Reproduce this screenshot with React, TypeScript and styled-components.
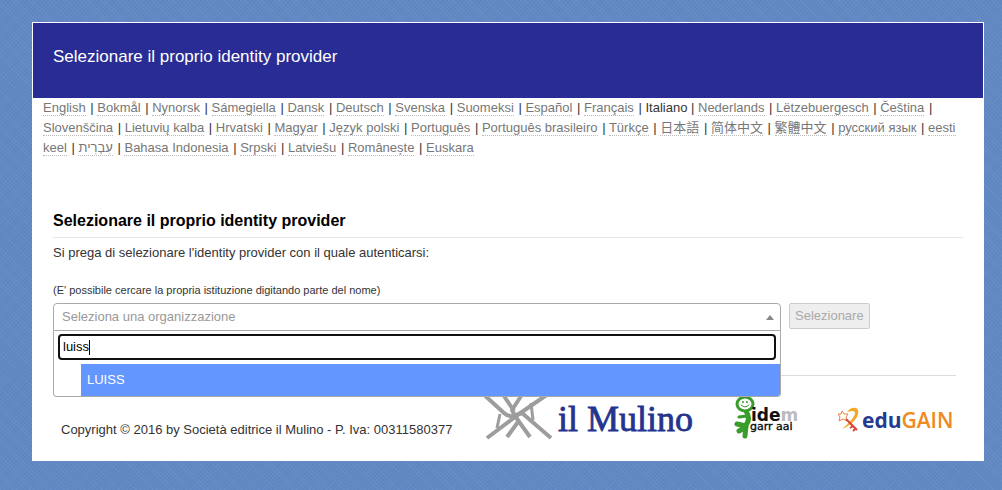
import React, { useState } from "react";
import styled, { createGlobalStyle, css } from "styled-components";

const GlobalStyle = createGlobalStyle`
  *, *::before, *::after { box-sizing: border-box; }
  body {
    margin: 0;
    padding: 22px 18px 29px 32px;
    color: #333;
    font-family: "Liberation Sans", Arial, "Noto Sans CJK SC", sans-serif;
    font-size: 13px;
    line-height: 20px;
    background-color: #6188c2;
    background-image:
      repeating-linear-gradient(45deg, rgba(255, 255, 255, 0.05) 0 1px, transparent 1px 3px),
      repeating-linear-gradient(-45deg, rgba(30, 60, 130, 0.04) 0 1px, transparent 1px 3px);
  }
`;

const Page = styled.div`
  background: #fff;
  border: 1px solid #fff;
`;

const Header = styled.header`
  display: flex;
  align-items: center;
  height: 75px;
  padding: 0 20px 8px;
  background: #282c94;
`;

const SiteTitle = styled.h1`
  margin: 0;
  color: #fff;
  font-size: 17px;
  font-weight: 400;
  line-height: 24px;
`;

const Languages = styled.nav`
  padding: 0 20px 0 10px;
`;

const LanguageLink = styled.a`
  margin-right: 1px;
  color: #777;
  text-decoration: none;
  border-bottom: 1px dotted #bbb;
`;

const Content = styled.main`
  padding: 51px 20px 0;
`;

const Title = styled.h2`
  margin: 0;
  padding-bottom: 4px;
  border-bottom: 1px solid #e6e6e6;
  color: #000;
  font-size: 16px;
  font-weight: 700;
  line-height: 24px;
`;

const Intro = styled.p`
  margin: 5px 0 17px;
`;

const Hint = styled.label`
  display: block;
  font-size: 11px;
  padding-bottom: 3px;
`;

const Form = styled.form`
  display: flex;
  align-items: flex-start;
  gap: 8px;
`;

const Picker = styled.div`
  position: relative;
  width: 80%;
`;

const Selection = styled.button`
  display: flex;
  align-items: center;
  justify-content: space-between;
  width: 100%;
  height: 28px;
  padding: 0 6px 0 8px;
  border: 1px solid #aaa;
  border-radius: 4px 4px 0 0;
  background: #fff;
  color: #999;
  font: inherit;
`;

const Arrow = styled.span`
  border: 4px solid transparent;
  border-top-width: 0;
  border-bottom: 5px solid #888;
`;

const Dropdown = styled.div`
  position: absolute;
  z-index: 1;
  top: 100%;
  left: 0;
  right: 0;
  overflow: hidden;
  border: 1px solid #aaa;
  border-top: 0;
  border-radius: 0 0 4px 4px;
  background: #fff;
`;

const SearchBox = styled.div`
  display: flex;
  align-items: center;
  height: 26px;
  margin: 3px 4px 4px;
  padding: 0 3px;
  border: 2px solid #101010;
  border-radius: 4px;
  cursor: text;
`;

const SearchInput = styled.input`
  field-sizing: content;
  padding: 0;
  border: 0;
  outline: 0;
  background: none;
  color: #000;
  font: inherit;
`;

const Caret = styled.span`
  width: 1px;
  height: 15px;
  background: #000;
`;

const Options = styled.ul`
  margin: 0;
  padding: 0 0 0 27px;
  list-style: none;
`;

const Option = styled.li<{ $active?: boolean }>`
  padding: 6px;
  ${({ $active }) => $active && css`
    background: #6397ff;
    color: #fff;
  `}
`;

const Submit = styled.button`
  height: 26px;
  padding: 0 5px;
  border: 1px solid #ccc;
  border-radius: 2px;
  background: #eee;
  color: #aaa;
  font: inherit;
`;

const Rule = styled.hr`
  margin: 44px 7px 0 0;
  border: 0;
  border-top: 1px solid #ddd;
`;

const Footer = styled.footer`
  display: flex;
  align-items: flex-start;
  gap: 32px;
  padding: 9px 20px 20px 28px;
`;

const Copyright = styled.p`
  margin: 0;
  padding-top: 35px;
`;

const Logos = styled.div`
  display: flex;
  gap: 40px;
`;

const Logo = styled.svg`
  display: block;
  flex: none;
`;

const languages = [
  "English", "Bokmål", "Nynorsk", "Sámegiella", "Dansk", "Deutsch", "Svenska", "Suomeksi",
  "Español", "Français", "Italiano", "Nederlands", "Lëtzebuergesch", "Čeština", "Slovenščina",
  "Lietuvių kalba", "Hrvatski", "Magyar", "Język polski", "Português", "Português brasileiro",
  "Türkçe", "日本語", "简体中文", "繁體中文", "русский язык", "eesti keel", "עִבְרִית",
  "Bahasa Indonesia", "Srpski", "Latviešu", "Românește", "Euskara",
];
const current = "Italiano";

function MulinoLogo() {
  return (
    <Logo width="210" height="55" viewBox="0 0 210 55" role="img" aria-label="il Mulino">
      <g stroke="#9d9d9d" strokeWidth="4" fill="none" strokeLinejoin="round">
        <path d="M-2 8 L20 28 Q24 32 31 31 L46 52" />
        <path d="M18 8 L30 26 M39 8 L28 25 L31 31" />
        <path d="M64 9 L35 29 L3 53" />
        <path d="M23 52 L34 37 M32 30 L38 28 L67 53" />
        <path d="M47 18 L49 35 M16 29 L13 43" strokeWidth="3" />
      </g>
      <text x="74" y="46" fill="#24348f" stroke="#24348f" strokeWidth="0.8" fontFamily="Liberation Serif, serif" fontSize="36">il Mulino</text>
    </Logo>
  );
}

function IdemLogo() {
  return (
    <Logo width="64" height="55" viewBox="0 0 64 55" role="img" aria-label="idem garr aai">
      <g fill="none" stroke="#3a9c2b" strokeLinecap="round" strokeLinejoin="round">
        <path d="M12 26 Q17 34 12 40" strokeWidth="5" />
        <path d="M12 41 L3 39 M12 42 L5 46 M12 41 L11 51" strokeWidth="5" />
        <path d="M13 31 L5 32" strokeWidth="3" />
        <ellipse cx="11" cy="19" rx="8" ry="7" strokeWidth="3" fill="#fff" />
        <path d="M7 20 Q11 24 15 20" strokeWidth="1" />
      </g>
      <circle cx="9" cy="17" r="1" fill="#3a9c2b" />
      <circle cx="13" cy="17" r="1" fill="#3a9c2b" />
      <text x="17" y="36" fontFamily="DejaVu Sans, sans-serif" fontWeight="700" fontSize="17" fill="#111">ide<tspan fill="#bbb">m</tspan></text>
      <text x="16" y="45" fontFamily="DejaVu Sans, sans-serif" fontSize="11" fill="#111" stroke="#111" strokeWidth="0.4">garr aai</text>
    </Logo>
  );
}

function EduGainLogo() {
  return (
    <Logo width="118" height="55" viewBox="0 0 118 55" role="img" aria-label="eduGAIN">
      <path d="M9 27 Q13 22 18 23 Q22 25 19 32 Q14 40 4 44 Q14 36 17 29 Q18 24 9 27Z" fill="#f5a623" />
      <path d="M4 26 L6 29 L10 29 L8 32 L9 36 L5 34 L1 36 L2 32 L0 29 L3 29Z" fill="none" stroke="#e8833a" strokeWidth="1" />
      <path d="M8 34 L19 45 M15 41 L12 43 M18 43 L15 46" stroke="#d9443a" strokeWidth="2" fill="none" />
      <text x="24" y="43" fontFamily="Open Sans, sans-serif" fontWeight="700" fontSize="21" fill="#243b8f">edu<tspan fill="#ee8a22" fontWeight="600">GAIN</tspan></text>
    </Logo>
  );
}

export default function App() {
  const [query, setQuery] = useState("luiss");
  return (
    <>
      <GlobalStyle />
      <Page>
        <Header>
          <SiteTitle>Selezionare il proprio identity provider</SiteTitle>
        </Header>
        <Languages aria-label="Lingua">
          {languages.map((name, i) => (
            <React.Fragment key={name}>
              {i > 0 && " | "}
              {name === current ? name : <LanguageLink href="#">{name}</LanguageLink>}
            </React.Fragment>
          ))}
        </Languages>
        <Content>
          <Title>Selezionare il proprio identity provider</Title>
          <Intro>Si prega di selezionare l'identity provider con il quale autenticarsi:</Intro>
          <Hint htmlFor="idp-search">(E' possibile cercare la propria istituzione digitando parte del nome)</Hint>
          <Form onSubmit={(e) => e.preventDefault()}>
            <Picker>
              <Selection type="button" aria-haspopup="listbox" aria-expanded="true">
                Seleziona una organizzazione
                <Arrow />
              </Selection>
              <Dropdown>
                <SearchBox>
                  <SearchInput id="idp-search" value={query} onChange={(e) => setQuery(e.target.value)} />
                  <Caret />
                </SearchBox>
                <Options role="listbox" aria-label="Organizzazioni">
                  <Option role="option" aria-selected="true" $active>LUISS</Option>
                </Options>
              </Dropdown>
            </Picker>
            <Submit disabled>Selezionare</Submit>
          </Form>
          <Rule />
        </Content>
        <Footer>
          <Copyright>Copyright © 2016 by Società editrice il Mulino - P. Iva: 00311580377</Copyright>
          <Logos>
            <MulinoLogo />
            <IdemLogo />
            <EduGainLogo />
          </Logos>
        </Footer>
      </Page>
    </>
  );
}
